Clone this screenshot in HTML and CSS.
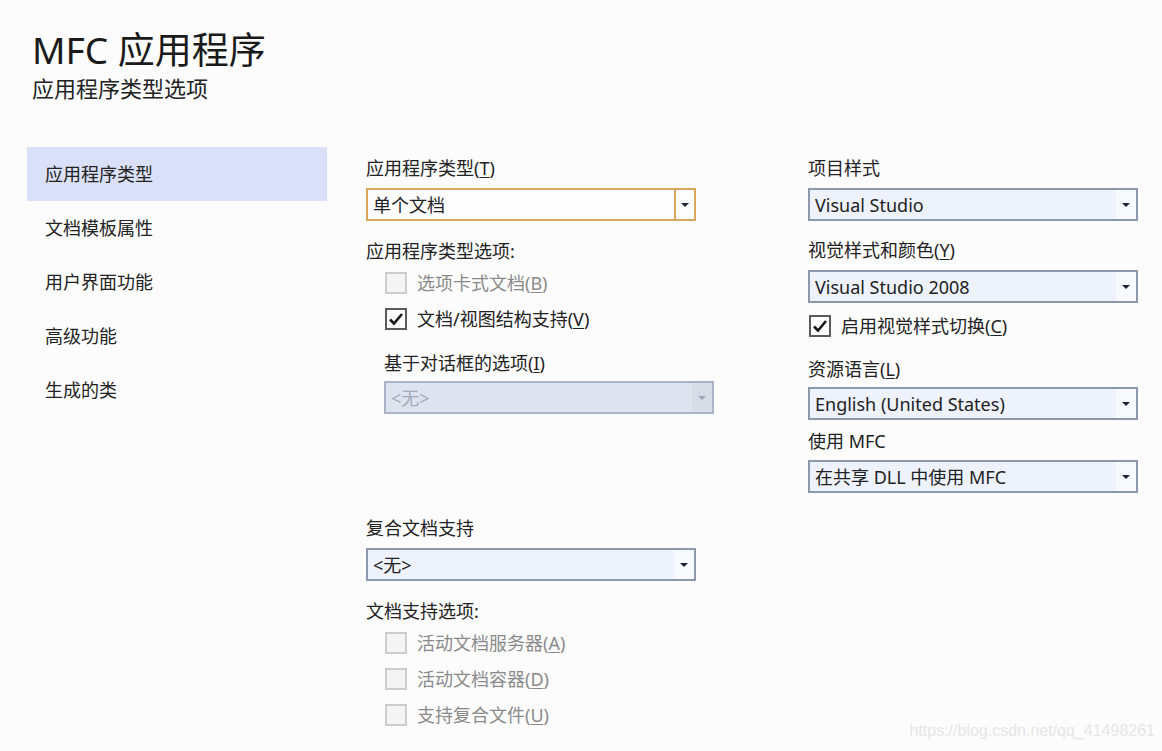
FILE: index.html
```html
<!DOCTYPE html>
<html lang="zh-CN">
<head>
    <meta charset="UTF-8">
    <title>MFC 应用程序</title>
    <link rel="stylesheet" href="styles.css">
</head>
<body>

    <!-- Header -->
    <div class="header">
        <div class="title">MFC 应用程序</div>
        <div class="subtitle">应用程序类型选项</div>
    </div>

    <div class="main">
        <!-- Sidebar -->
        <div class="nav">
            <div class="nav-item active">应用程序类型</div>
            <div class="nav-item">文档模板属性</div>
            <div class="nav-item">用户界面功能</div>
            <div class="nav-item">高级功能</div>
            <div class="nav-item">生成的类</div>
        </div>

        <!-- Middle column -->
        <div class="col col-mid">
            <div class="label">应用程序类型(<u>T</u>)</div>
            <div class="combo focused m8">
                <span class="combo-text">单个文档</span>
                <span class="combo-btn"><i class="arrow"></i></span>
            </div>

            <div class="label m18">应用程序类型选项:</div>
            <div class="check-row disabled m2">
                <span class="box"></span>
                <span>选项卡式文档(<u>B</u>)</span>
            </div>
            <div class="check-row">
                <span class="box checked"><svg width="16" height="14" viewBox="0 0 16 14"><path d="M2 7.5 L6 11.5 L14 2" fill="none" stroke="#1a1a1a" stroke-width="2.6"/></svg></span>
                <span>文档/视图结构支持(<u>V</u>)</span>
            </div>

            <div class="indent">
                <div class="label m14">基于对话框的选项(<u>I</u>)</div>
                <div class="combo disabled m6">
                    <span class="combo-text">&lt;无&gt;</span>
                    <span class="combo-btn"><i class="arrow"></i></span>
                </div>
            </div>

            <div class="label m102">复合文档支持</div>
            <div class="combo m8">
                <span class="combo-text">&lt;无&gt;</span>
                <span class="combo-btn"><i class="arrow"></i></span>
            </div>

            <div class="label m18">文档支持选项:</div>
            <div class="check-row disabled m3">
                <span class="box"></span>
                <span>活动文档服务器(<u>A</u>)</span>
            </div>
            <div class="check-row disabled">
                <span class="box"></span>
                <span>活动文档容器(<u>D</u>)</span>
            </div>
            <div class="check-row disabled">
                <span class="box"></span>
                <span>支持复合文件(<u>U</u>)</span>
            </div>
        </div>

        <!-- Right column -->
        <div class="col col-right">
            <div class="label">项目样式</div>
            <div class="combo m8">
                <span class="combo-text">Visual Studio</span>
                <span class="combo-btn"><i class="arrow"></i></span>
            </div>

            <div class="label m17">视觉样式和颜色(<u>Y</u>)</div>
            <div class="combo m8">
                <span class="combo-text">Visual Studio 2008</span>
                <span class="combo-btn"><i class="arrow"></i></span>
            </div>

            <div class="check-row m5 flush">
                <span class="box checked"><svg width="16" height="14" viewBox="0 0 16 14"><path d="M2 7.5 L6 11.5 L14 2" fill="none" stroke="#1a1a1a" stroke-width="2.6"/></svg></span>
                <span>启用视觉样式切换(<u>C</u>)</span>
            </div>

            <div class="label m13">资源语言(<u>L</u>)</div>
            <div class="combo m6">
                <span class="combo-text">English (United States)</span>
                <span class="combo-btn"><i class="arrow"></i></span>
            </div>

            <div class="label m9">使用 MFC</div>
            <div class="combo m7">
                <span class="combo-text">在共享 DLL 中使用 MFC</span>
                <span class="combo-btn"><i class="arrow"></i></span>
            </div>
        </div>
    </div>

    <div class="watermark">https://blog.csdn.net/qq_41498261</div>

</body>
</html>
```

FILE: styles.css
```css
/* General */
* {
    margin: 0;
    padding: 0;
    box-sizing: border-box;
}
body {
    background-color: #fcfcfc;
    color: #222;
    font-family: "Noto Sans", "Noto Sans CJK SC", sans-serif;
    font-size: 18px;
    line-height: 24px;
    width: 1162px;
    height: 751px;
    overflow: hidden;
    position: relative;
}
u {
    text-decoration-thickness: 1px;
    text-underline-offset: 2px;
}

/* Header */
.header {
    padding: 30px 0 0 32px;
    height: 147px;
}
.title {
    font-size: 37px;
    line-height: 40px;
    color: #1a1a1a;
}
.subtitle {
    font-size: 22px;
    line-height: 26px;
    margin-top: 5px;
    color: #222;
}

/* Layout */
.main {
    display: flex;
}

/* Sidebar */
.nav {
    width: 300px;
    margin-left: 27px;
}
.nav-item {
    height: 54px;
    line-height: 54px;
    padding-left: 18px;
    font-size: 18px;
}
.nav-item.active {
    background-color: #dae0f7;
}

/* Columns */
.col {
    padding-top: 9px;
}
.col-mid {
    width: 348px;
    margin-left: 39px;
}
.col-right {
    width: 330px;
    margin-left: 94px;
}
.indent {
    padding-left: 18px;
}

.label {
    height: 24px;
    line-height: 24px;
    white-space: nowrap;
}

/* Combo boxes */
.combo {
    display: flex;
    width: 330px;
    height: 33px;
    border: 2px solid #8c99ad;
    background-color: #eef2fd;
}
.combo-text {
    flex: 1;
    line-height: 30px;
    padding-left: 5px;
    font-size: 18px;
    white-space: nowrap;
}
.combo-btn {
    width: 20px;
    display: flex;
    align-items: center;
    justify-content: center;
    background-color: #f8f9fd;
}
.arrow {
    display: block;
    width: 0;
    height: 0;
    border-left: 4px solid transparent;
    border-right: 4px solid transparent;
    border-top: 4px solid #1c2333;
    margin-top: 1px;
}
.combo.focused {
    border-color: #d6a75c;
    background-color: #fdfdfd;
}
.combo.focused .combo-btn {
    border-left: 2px solid #d6a75c;
    background-color: #fdfdfd;
}
.combo.disabled {
    border-color: #a9b5c6;
    background-color: #dde3ef;
    color: #a3abba;
}
.combo.disabled .combo-btn {
    background-color: #d7dce7;
}
.combo.disabled .arrow {
    border-top-color: #9ea5b2;
}

/* Checkboxes */
.check-row {
    display: flex;
    align-items: center;
    height: 35.8px;
    padding-left: 19px;
    gap: 10px;
}
.check-row.flush {
    padding-left: 1px;
}
.box {
    width: 22px;
    height: 22px;
    flex-shrink: 0;
    border: 2px solid #5a5a5a;
    background-color: #fdfdfd;
    display: flex;
    align-items: center;
    justify-content: center;
}
.check-row.disabled {
    color: #8a8a8a;
}
.check-row.disabled .box {
    border-color: #cdcdcd;
    background-color: #f4f4f4;
}

/* Spacing helpers */
.m2 { margin-top: 2px; }
.m3 { margin-top: 3px; }
.m5 { margin-top: 5px; }
.m6 { margin-top: 6px; }
.m7 { margin-top: 7px; }
.m8 { margin-top: 8px; }
.m9 { margin-top: 9px; }
.m13 { margin-top: 13px; }
.m14 { margin-top: 14px; }
.m17 { margin-top: 17px; }
.m18 { margin-top: 18px; }
.m102 { margin-top: 102px; }

/* Watermark */
.watermark {
    position: absolute;
    right: 7px;
    bottom: 8px;
    font-family: "Liberation Sans", Arial, sans-serif;
    font-size: 16px;
    color: #e6e6e6;
}
```
